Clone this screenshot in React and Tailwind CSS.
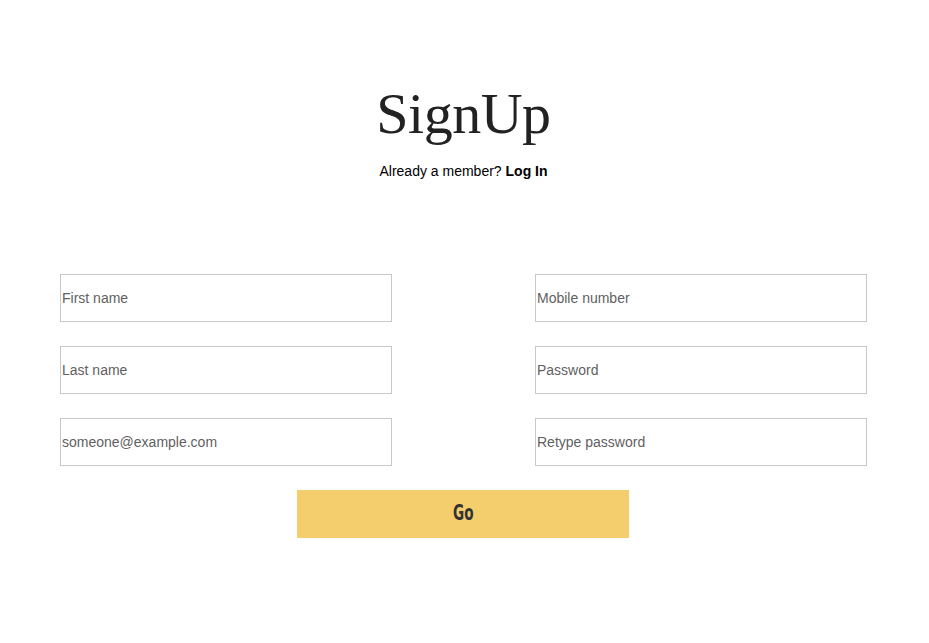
import React from 'react';

const fields = [
  ['First name', 'Mobile number'],
  ['Last name', 'Password'],
  ['someone@example.com', 'Retype password'],
];

const Field = ({ placeholder, type = 'text' }) => (
  <input
    type={type}
    placeholder={placeholder}
    className="w-[332px] h-[48px] border border-[#c8c8c8] px-[1px] text-[14px] text-[#333] placeholder:text-[#5f5f5f] outline-none bg-white"
    style={{ fontFamily: '"Liberation Sans", Arial, sans-serif' }}
  />
);

const App = () => {
  return (
    <div className="min-h-[643px] bg-white">
      <div className="flex flex-col items-center pt-[78px] pr-[2px]">
        <h1
          className="text-[58px] leading-[72px] text-[#222] tracking-[-0.5px]"
          style={{ fontFamily: '"Liberation Serif", "DejaVu Serif", serif' }}
        >
          SignUp
        </h1>
        <p
          className="mt-[11px] text-[14px] text-black"
          style={{ fontFamily: '"Liberation Sans", Arial, sans-serif' }}
        >
          Already a member? <span className="font-bold">Log In</span>
        </p>
      </div>

      <div className="ml-[60px] mt-[92px] w-[807px]">
        <div className="grid grid-cols-[332px_332px] gap-x-[143px] gap-y-[24px]">
          {fields.map(([left, right]) => (
            <React.Fragment key={left}>
              <Field placeholder={left} type={left.includes('@') ? 'email' : 'text'} />
              <Field placeholder={right} type={right.includes('assword') ? 'password' : 'text'} />
            </React.Fragment>
          ))}
        </div>
        <div className="flex mt-[24px] pl-[237px]">
          <button
            className="w-[332px] h-[48px] bg-[#f4cd6c] text-[#333] flex items-center justify-center"
            style={{ fontFamily: '"DejaVu Sans Condensed", "Liberation Sans Narrow", sans-serif' }}
          >
            <span className="inline-block text-[21px] font-bold scale-x-[0.72]">Go</span>
          </button>
        </div>
      </div>
    </div>
  );
};

export default App;
